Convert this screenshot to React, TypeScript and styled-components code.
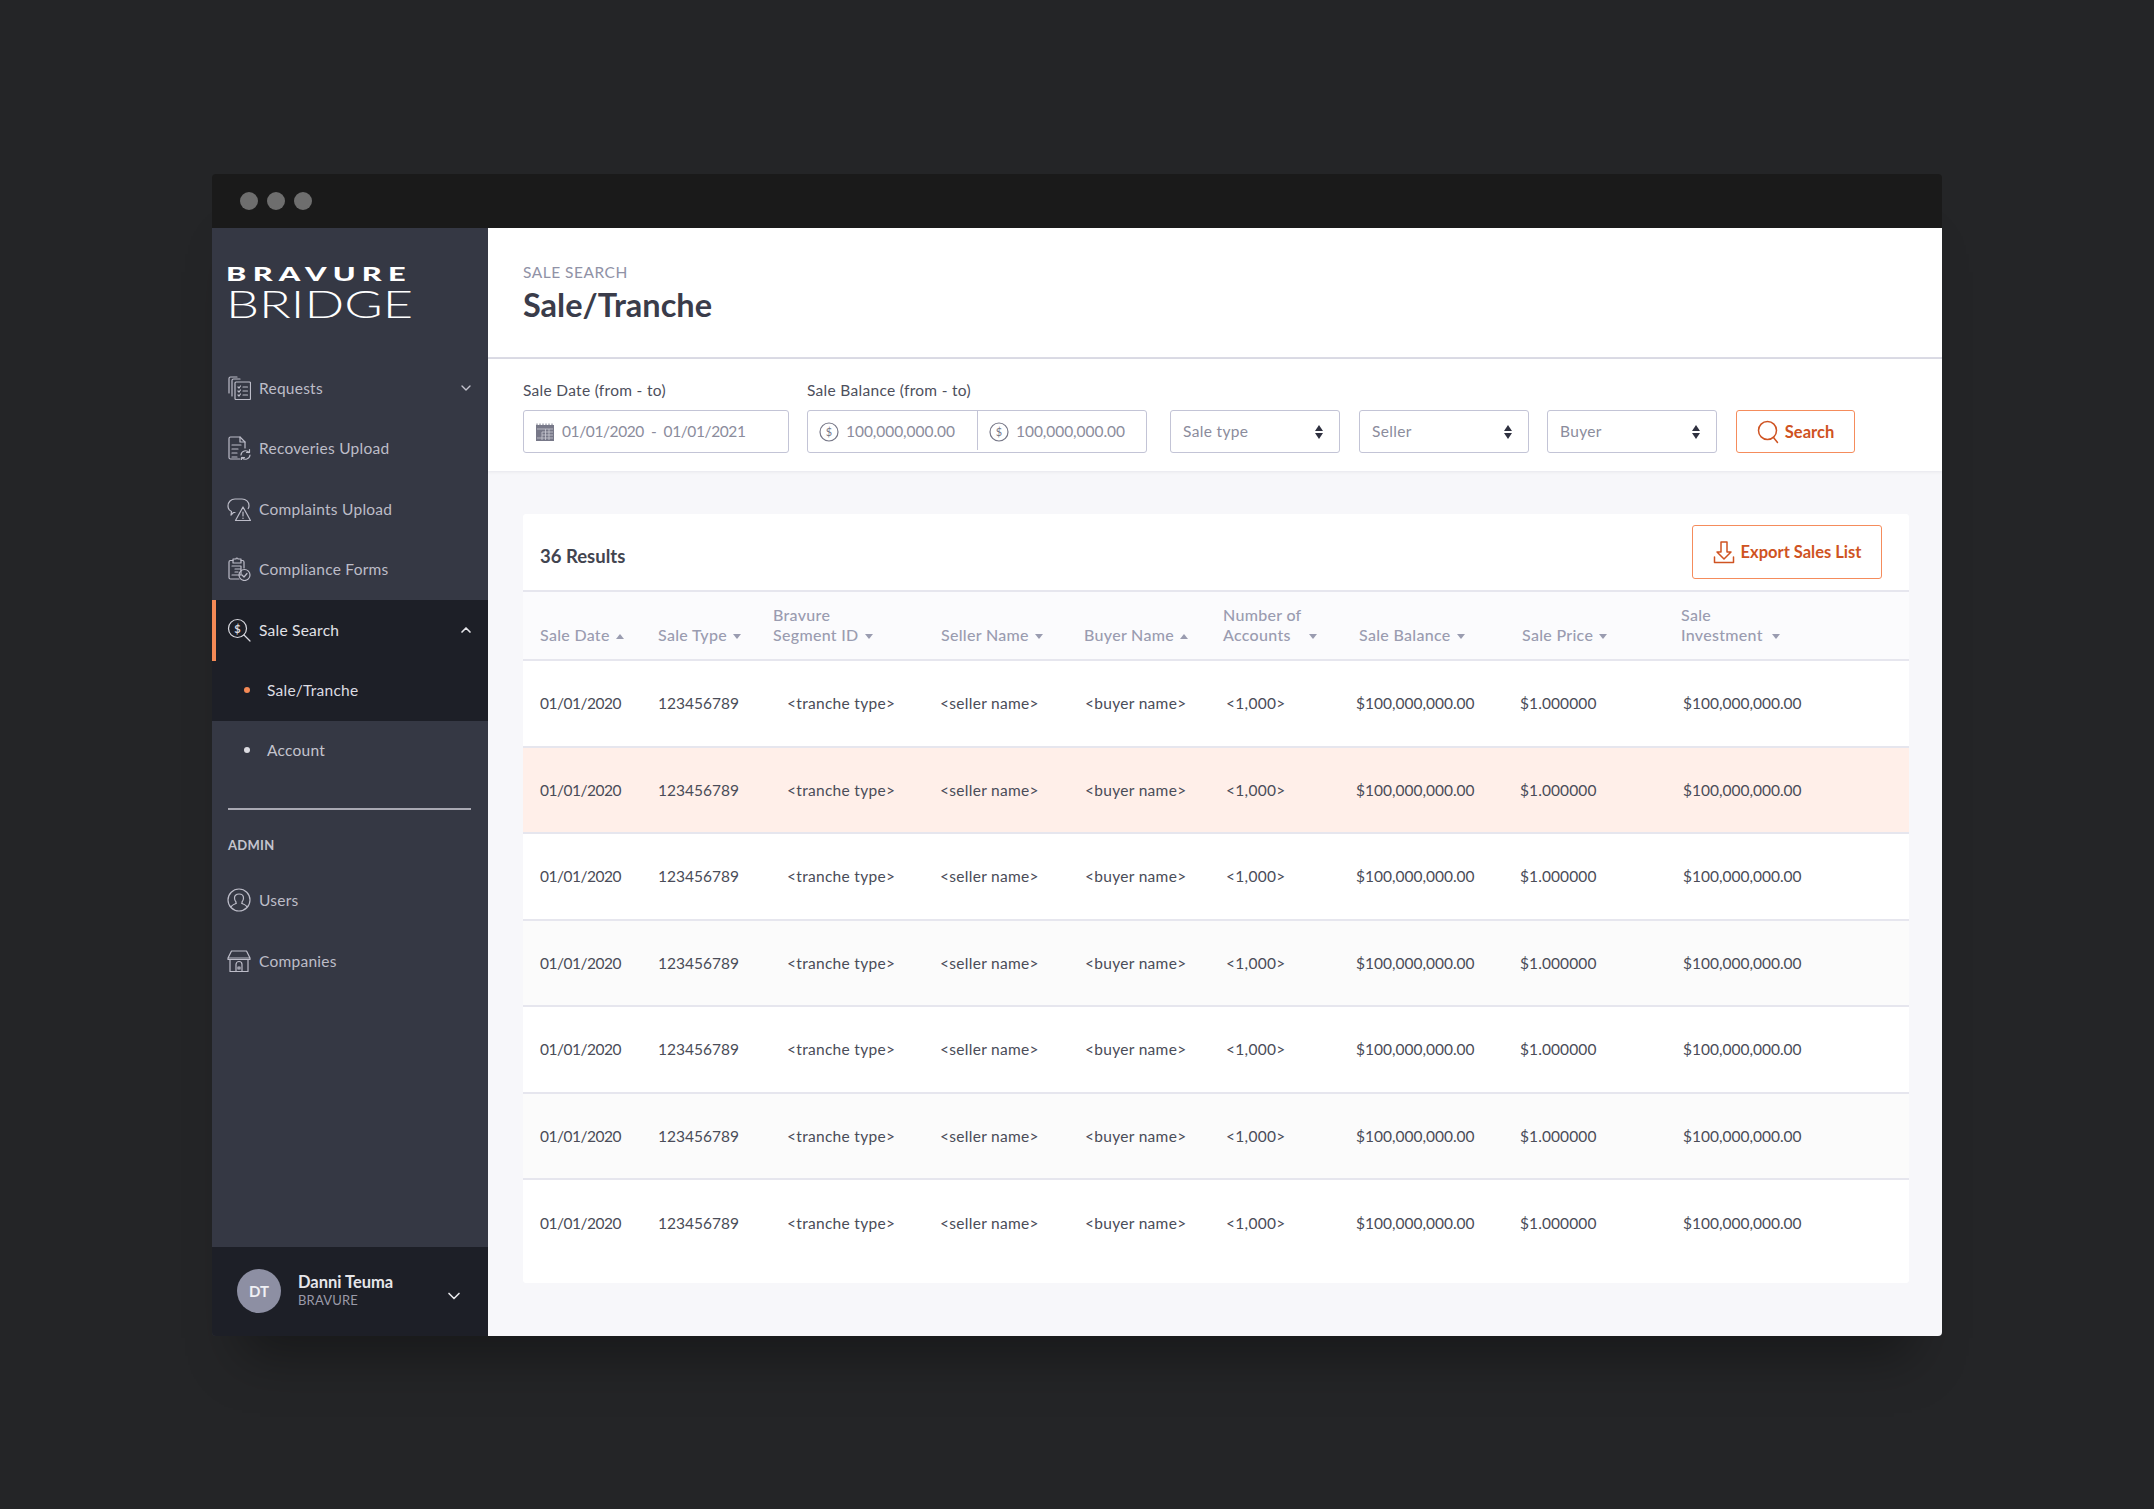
import React from "react";
import styled, { createGlobalStyle } from "styled-components";
import { ChevronDown, ChevronUp } from "lucide-react";

const GlobalStyle = createGlobalStyle`
  * { box-sizing: border-box; }
  html, body { margin: 0; padding: 0; background: #242527; }
  body { font-family: "Lato", "Noto Sans", sans-serif; }
`;

const Page = styled.div`
  width: 2154px;
  height: 1509px;
  padding: 174px 212px 0;
  background: #242527;
`;

const Window = styled.div`
  width: 1730px;
  height: 1162px;
  display: flex;
  flex-direction: column;
  box-shadow: 0 50px 50px -30px rgba(0, 0, 0, 0.35);
  border-radius: 4px;
  overflow: hidden;
`;

const TitleBar = styled.div`
  height: 54px;
  flex: none;
  background: #1a1a1a;
  display: flex;
  align-items: center;
  gap: 9px;
  padding-left: 28px;
`;

const Dot = styled.span`
  width: 18px;
  height: 18px;
  border-radius: 50%;
  background: #6e6e6e;
`;

const Body = styled.div`
  flex: 1;
  display: flex;
  min-height: 0;
`;

const Sidebar = styled.aside`
  width: 276px;
  flex: none;
  background: #353844;
  display: flex;
  flex-direction: column;
`;

const Logo = styled.svg`
  display: block;
  margin: 36px 0 0 14px;
  width: 190px;
  height: 64px;
  overflow: visible;
`;

const Nav = styled.nav`
  margin-top: 30px;
`;

const NavItem = styled.div<{ $active?: boolean }>`
  height: 60.5px;
  display: flex;
  align-items: center;
  padding-left: 15px;
  padding-bottom: 1px;
  color: ${(p) => (p.$active ? "#e2e2e8" : "#bdbdc8")};
  background: ${(p) => (p.$active ? "#1d1f27" : "transparent")};
  font-size: 15.5px;
  letter-spacing: 0.25px;
  position: relative;

  ${(p) =>
    p.$active &&
    `&::before {
      content: "";
      position: absolute;
      left: 0;
      top: 0;
      bottom: 0;
      width: 4px;
      background: #f58a56;
    }`}
`;

const NavIcon = styled.svg`
  width: 24px;
  height: 24px;
  flex: none;
  margin-right: 8px;
  fill: none;
  stroke: currentColor;
  stroke-width: 1.2;
  stroke-linecap: round;
  stroke-linejoin: round;
  color: #bcbcc8;
`;

const NavChevron = styled.span`
  margin-left: auto;
  margin-right: 14px;
  display: flex;
`;

const SubItem = styled.div<{ $active?: boolean }>`
  height: 60px;
  display: flex;
  align-items: center;
  padding-left: 32px;
  padding-bottom: 1px;
  font-size: 15.5px;
  letter-spacing: 0.25px;
  color: ${(p) => (p.$active ? "#dcdce2" : "#c4c4ce")};
  background: ${(p) => (p.$active ? "#1d1f27" : "transparent")};
`;

const Bullet = styled.span<{ $active?: boolean }>`
  width: 6px;
  height: 6px;
  border-radius: 50%;
  margin-right: 17px;
  background: ${(p) => (p.$active ? "#f58a56" : "#dcdce2")};
`;

const Divider = styled.div`
  height: 2px;
  margin: 27px 17px 0 16px;
  background: #a9a9b3;
`;

const SectionLabel = styled.div`
  margin: 27px 0 0 16px;
  font-size: 13px;
  font-weight: 700;
  letter-spacing: 0.3px;
  color: #c4c4ce;
  line-height: 16px;
`;

const AdminNav = styled.div`
  margin-top: 18px;
`;

const UserBar = styled.div`
  margin-top: auto;
  height: 89px;
  background: #1d1f27;
  display: flex;
  align-items: center;
  padding: 0 24px 0 25px;
`;

const Avatar = styled.div`
  width: 44px;
  height: 44px;
  margin-top: -1px;
  border-radius: 50%;
  background: #8d8fa3;
  color: #f0f0f4;
  font-size: 15px;
  font-weight: 700;
  display: flex;
  align-items: center;
  justify-content: center;
`;

const UserText = styled.div`
  margin-left: 17px;
  margin-top: -2px;
`;

const UserName = styled.div`
  font-size: 16.5px;
  font-weight: 700;
  color: #e6e6ea;
  line-height: 18px;
`;

const UserOrg = styled.div`
  font-size: 13px;
  letter-spacing: 0.2px;
  color: #9a9aa8;
  line-height: 18px;
`;

const UserChevron = styled.span`
  margin-left: auto;
  margin-top: 8px;
  display: flex;
`;

const Main = styled.main`
  flex: 1;
  min-width: 0;
  background: #f7f7fa;
  display: flex;
  flex-direction: column;
`;

const Header = styled.header`
  height: 131px;
  flex: none;
  background: #fff;
  border-bottom: 2px solid #dcdce6;
  padding: 34px 35px 0;
`;

const Crumb = styled.div`
  font-size: 15.5px;
  letter-spacing: 0.5px;
  line-height: 20px;
  color: #9092a6;
`;

const Title = styled.h1`
  margin: 3px 0 0;
  font-size: 32.5px;
  line-height: 40px;
  font-weight: 700;
  color: #3a3c4a;
`;

const FilterBar = styled.div`
  height: 112px;
  flex: none;
  background: #fff;
  box-shadow: 0 1px 3px rgba(40, 40, 70, 0.08);
  padding: 22px 0 18px 35px;
  display: flex;
  align-items: flex-end;
`;

const Field = styled.div<{ $gap?: number }>`
  margin-right: ${(p) => p.$gap ?? 18}px;
`;

const FieldLabel = styled.div`
  font-size: 15.5px;
  letter-spacing: 0.3px;
  line-height: 20px;
  color: #4d4f5c;
  margin-bottom: 10px;
`;

const InputBox = styled.div<{ $width: number }>`
  width: ${(p) => p.$width}px;
  height: 43px;
  padding-bottom: 2px;
  background: #fff;
  border: 1px solid #c3c4d6;
  border-radius: 3px;
  display: flex;
  align-items: center;
  color: #8b8c9c;
  font-size: 15.5px;
  letter-spacing: 0.35px;
`;

const InputPart = styled.div<{ $width?: number; $ruled?: boolean; $tracking: number }>`
  height: 100%;
  width: ${(p) => (p.$width ? `${p.$width}px` : "auto")};
  flex: ${(p) => (p.$width ? "none" : 1)};
  display: flex;
  align-items: center;
  padding-left: 11px;
  letter-spacing: ${(p) => p.$tracking}px;
  border-right: ${(p) => (p.$ruled ? "1px solid #c3c4d6" : "none")};
`;

const FieldIcon = styled.svg`
  width: 20px;
  height: 20px;
  flex: none;
  margin-right: 7px;
  margin-top: 2px;
  fill: none;
  stroke: #777888;
  stroke-width: 1.2;
`;

const SelectBox = styled(InputBox)`
  padding: 0 16px 2px 12px;
  justify-content: space-between;
`;

const UpDown = styled.span`
  display: flex;
  flex-direction: column;
  gap: 2px;
  margin-top: 2px;

  &::before,
  &::after {
    content: "";
    width: 0;
    height: 0;
    border-left: 4.5px solid transparent;
    border-right: 4.5px solid transparent;
  }
  &::before {
    border-bottom: 6px solid #2f3140;
  }
  &::after {
    border-top: 6px solid #2f3140;
  }
`;

const OutlineButton = styled.button<{ $width: number; $height: number }>`
  width: ${(p) => p.$width}px;
  height: ${(p) => p.$height}px;
  background: #fff;
  border: 1px solid #f58c5c;
  border-radius: 3px;
  color: #cf5322;
  font-family: inherit;
  font-size: 16.5px;
  font-weight: 700;
  display: flex;
  align-items: center;
  justify-content: center;
  gap: 6px;
  padding: 0;
`;

const ButtonIcon = styled.svg`
  width: 22px;
  height: 24px;
  flex: none;
  fill: none;
  stroke: #cf5322;
  stroke-width: 1.5;
  stroke-linecap: round;
  stroke-linejoin: round;
`;

const Content = styled.div`
  flex: 1;
  padding: 43px 33px 53px 35px;
  min-height: 0;
`;

const Card = styled.section`
  height: 100%;
  background: #fff;
  border-radius: 3px;
`;

const CardTop = styled.div`
  height: 78px;
  display: flex;
  align-items: center;
  justify-content: space-between;
  padding: 0 27px 1px 17px;
  border-bottom: 2px solid #e6e6ee;
`;

const Results = styled.div`
  font-size: 18.5px;
  font-weight: 700;
  color: #42444f;
  margin-top: 8px;
`;

const columns = "119px 114px 168px 143px 139px 134px 163px 161px 1fr";

const HeadRow = styled.div`
  height: 69px;
  display: grid;
  grid-template-columns: ${columns};
  padding: 0 0 15px 17px;
  background: #fbfbfd;
  border-bottom: 2px solid #e6e6ee;
  align-items: end;
`;

const HeadCell = styled.div<{ $indent?: number }>`
  margin-left: ${(p) => p.$indent ?? 0}px;
  font-size: 16px;
  letter-spacing: 0.3px;
  line-height: 19.5px;
  font-weight: 500;
  color: #9a9cb0;
  white-space: pre-line;
`;

const Caret = styled.span<{ $up?: boolean; $gap?: number }>`
  display: inline-block;
  width: 0;
  height: 0;
  margin-left: ${(p) => p.$gap ?? 6}px;
  vertical-align: 2px;
  border-left: 4.5px solid transparent;
  border-right: 4.5px solid transparent;
  ${(p) =>
    p.$up ? "border-bottom: 5px solid #9a9cb0;" : "border-top: 5px solid #9a9cb0;"}
`;

const Row = styled.div<{ $bg: string }>`
  height: 86.5px;
  display: grid;
  grid-template-columns: ${columns};
  padding-left: 17px;
  align-items: center;
  background: ${(p) => p.$bg};
  border-bottom: 2px solid #e6e6ee;
  &:last-child {
    border-bottom: none;
  }
`;

const Cell = styled.div<{ $indent?: number; $tracking: number }>`
  margin-left: ${(p) => p.$indent ?? 0}px;
  font-size: 15.5px;
  letter-spacing: ${(p) => p.$tracking}px;
  color: #4a4c58;
`;

const heads: { label: string; up?: boolean; indent?: number; gap?: number }[] = [
  { label: "Sale Date", up: true },
  { label: "Sale Type", indent: -1 },
  { label: "Bravure\nSegment ID" },
  { label: "Seller Name" },
  { label: "Buyer Name", up: true },
  { label: "Number of\nAccounts", gap: 18 },
  { label: "Sale Balance", indent: 2 },
  { label: "Sale Price", indent: 2 },
  { label: "Sale\nInvestment", gap: 9 },
];

const cells: { text: string; indent?: number; tracking: number }[] = [
  { text: "01/01/2020", tracking: -0.5 },
  { text: "123456789", indent: -1, tracking: 0 },
  { text: "<tranche type>", indent: 14, tracking: 0.3 },
  { text: "<seller name>", indent: -1, tracking: 0.3 },
  { text: "<buyer name>", indent: 1, tracking: 0.3 },
  { text: "<1,000>", indent: 3, tracking: 0.3 },
  { text: "$100,000,000.00", indent: -1, tracking: 0 },
  { text: "$1.000000", tracking: 0.1 },
  { text: "$100,000,000.00", indent: 2, tracking: 0 },
];

const rowColors = ["#fff", "#ffefe9", "#fff", "#fbfbfb", "#fff", "#fbfbfb", "#fff"];

const RequestsIcon = () => (
  <NavIcon viewBox="0 0 24 24">
    <path d="M2 17V2.500A1.500 1.500 0 0 1 3.500 1H10" />
    <path d="M5 20V4.500A1.500 1.500 0 0 1 6.500 3H13" />
    <rect x="8" y="6" width="15.500" height="17.500" rx="1" />
    <path d="M11 11l1 1 1.500-2M16 11h4.500M11 15l1 1 1.500-2M16 15h4.500M11 19l1 1 1.500-2M16 19h4.500" />
  </NavIcon>
);

const RecoveriesIcon = () => (
  <NavIcon viewBox="0 0 24 24">
    <path d="M13 23H3.500A1.500 1.500 0 0 1 2 21.500V2.500A1.500 1.500 0 0 1 3.500 1H13l5 5v6" />
    <path d="M13 1v5h5M5 9h9M5 13h6M5 17h5M5 21h5" />
    <path d="M14 19a4.500 4.500 0 0 1 8-2.500M23 19a4.500 4.500 0 0 1-8 2.500M22.500 13.500v3h-3M14.500 24v-2.500h3" />
  </NavIcon>
);

const ComplaintsIcon = () => (
  <NavIcon viewBox="0 0 24 24">
    <path d="M8 15.500H6.500L4 18l.5-3.500C2 13.500 1 11.500 1 9c0-4 3-7 7-7h7c4 0 7 3 7 6.500 0 1.200-.2 2.200-.8 3" />
    <path d="M16 10l7.500 13.500h-15zM16 15v4M16 21v.4" />
  </NavIcon>
);

const ComplianceIcon = () => (
  <NavIcon viewBox="0 0 24 24">
    <path d="M12 22H3.500A1.500 1.500 0 0 1 2 20.500V5a1.500 1.500 0 0 1 1.500-1.500H6M14 3.500h1.500A1.500 1.500 0 0 1 17 5v6" />
    <path d="M6 2h3a1 1 0 0 1 2 0h3v4H6zM5 9h9v9H5M8 12h5M8 15h3" />
    <circle cx="17.500" cy="18" r="5.500" />
    <path d="M15 18l2 2 3-3.500" />
  </NavIcon>
);

const SaleSearchIcon = () => (
  <NavIcon viewBox="0 0 24 24" style={{ color: "#d8d8df" }}>
    <circle cx="10.500" cy="10.500" r="9" />
    <path d="M17 17l6 6" />
    <text x="10.500" y="14.500" textAnchor="middle" fontSize="11" fontWeight="700" fill="currentColor" stroke="none">
      $
    </text>
  </NavIcon>
);

const UsersIcon = () => (
  <NavIcon viewBox="0 0 24 24">
    <circle cx="12" cy="12" r="11" />
    <path d="M9 15.500c-2.500 1-4.500 1.800-5 3.500M15 15.500c2.500 1 4.500 1.800 5 3.500" />
    <path d="M9 15.500v-1.500c-1-1-1.500-2.300-1.500-4C7.500 7.500 9.500 6 12 6s4.500 1.500 4.500 4c0 1.700-.5 3-1.500 4v1.500" />
  </NavIcon>
);

const CompaniesIcon = () => (
  <NavIcon viewBox="0 0 24 24">
    <path d="M4.500 2h15L23 9H1zM1 9v1.500h22V9" />
    <path d="M3 10.500V22.500h18V10.500" />
    <path d="M9 22.500v-7a3 3 0 0 1 6 0v7M11 18h2v2h-2z" />
  </NavIcon>
);

const DollarIcon = () => (
  <FieldIcon viewBox="0 0 20 20">
    <circle cx="10" cy="10" r="9" />
    <text x="10" y="14" textAnchor="middle" fontSize="11" fill="#777888" stroke="none">
      $
    </text>
  </FieldIcon>
);

const CalendarIcon = () => (
  <FieldIcon viewBox="0 0 20 20">
    <rect x="1" y="3" width="18" height="16" fill="#777888" stroke="none" />
    <path d="M2 1.500v2M5 1.500v2M8 1.500v2M11 1.500v2M14 1.500v2M17 1.500v2" strokeWidth="1" />
    <path d="M2 7h16M7 10h11M7 13h11M2 16h16M7 10v8M10.500 7v11M14 7v11" stroke="#c9c9d2" strokeWidth="0.8" />
  </FieldIcon>
);

const SearchIcon = () => (
  <ButtonIcon viewBox="0 0 22 24">
    <circle cx="10.500" cy="10.500" r="9" />
    <path d="M16.500 17.500l4 5" />
  </ButtonIcon>
);

const ExportIcon = () => (
  <ButtonIcon viewBox="0 0 22 24">
    <path d="M8 2h6v10h4l-7 7-7-7h4z" />
    <path d="M1.500 17v5.500h19V17" />
  </ButtonIcon>
);

const App = () => {
  return (
    <Page>
      <GlobalStyle />
      <Window>
        <TitleBar>
          <Dot />
          <Dot />
          <Dot />
        </TitleBar>
        <Body>
          <Sidebar>
            <Logo viewBox="0 0 190 64">
              <text
                x="0"
                y="17"
                textLength="186"
                lengthAdjust="spacingAndGlyphs"
                fontSize="19.500"
                fontWeight="900"
                letterSpacing="4"
                fill="#fff"
                fontFamily="Lato, sans-serif"
              >
                BRAVURE
              </text>
              <text
                x="0"
                y="54"
                textLength="187"
                lengthAdjust="spacingAndGlyphs"
                fontSize="37.500"
                fontWeight="300"
                fill="#fff"
                fontFamily="Lato, sans-serif"
              >
                BRIDGE
              </text>
            </Logo>
            <Nav>
              <NavItem>
                <RequestsIcon />
                Requests
                <NavChevron>
                  <ChevronDown size={16} strokeWidth={2} color="#c4c4ce" />
                </NavChevron>
              </NavItem>
              <NavItem>
                <RecoveriesIcon />
                Recoveries Upload
              </NavItem>
              <NavItem>
                <ComplaintsIcon />
                Complaints Upload
              </NavItem>
              <NavItem>
                <ComplianceIcon />
                Compliance Forms
              </NavItem>
              <NavItem $active>
                <SaleSearchIcon />
                Sale Search
                <NavChevron>
                  <ChevronUp size={16} strokeWidth={2.5} color="#e6e6ea" />
                </NavChevron>
              </NavItem>
              <SubItem $active>
                <Bullet $active />
                Sale/Tranche
              </SubItem>
              <SubItem>
                <Bullet />
                Account
              </SubItem>
            </Nav>
            <Divider />
            <SectionLabel>ADMIN</SectionLabel>
            <AdminNav>
              <NavItem>
                <UsersIcon />
                Users
              </NavItem>
              <NavItem>
                <CompaniesIcon />
                Companies
              </NavItem>
            </AdminNav>
            <UserBar>
              <Avatar>DT</Avatar>
              <UserText>
                <UserName>Danni Teuma</UserName>
                <UserOrg>BRAVURE</UserOrg>
              </UserText>
              <UserChevron>
                <ChevronDown size={20} strokeWidth={2} color="#e6e6ea" />
              </UserChevron>
            </UserBar>
          </Sidebar>
          <Main>
            <Header>
              <Crumb>SALE SEARCH</Crumb>
              <Title>Sale/Tranche</Title>
            </Header>
            <FilterBar>
              <Field>
                <FieldLabel>Sale Date (from - to)</FieldLabel>
                <InputBox $width={266}>
                  <InputPart $tracking={-0.4}>
                    <CalendarIcon />
                    01/01/2020&nbsp;&nbsp;-&nbsp;&nbsp;01/01/2021
                  </InputPart>
                </InputBox>
              </Field>
              <Field $gap={23}>
                <FieldLabel>Sale Balance (from - to)</FieldLabel>
                <InputBox $width={340}>
                  <InputPart $width={170} $ruled $tracking={-0.05}>
                    <DollarIcon />
                    100,000,000.00
                  </InputPart>
                  <InputPart $tracking={-0.05}>
                    <DollarIcon />
                    100,000,000.00
                  </InputPart>
                </InputBox>
              </Field>
              <Field $gap={19}>
                <SelectBox $width={170}>
                  Sale type
                  <UpDown />
                </SelectBox>
              </Field>
              <Field>
                <SelectBox $width={170}>
                  Seller
                  <UpDown />
                </SelectBox>
              </Field>
              <Field $gap={19}>
                <SelectBox $width={170}>
                  Buyer
                  <UpDown />
                </SelectBox>
              </Field>
              <OutlineButton $width={119} $height={43}>
                <SearchIcon />
                Search
              </OutlineButton>
            </FilterBar>
            <Content>
              <Card>
                <CardTop>
                  <Results>36 Results</Results>
                  <OutlineButton $width={190} $height={54}>
                    <ExportIcon />
                    Export Sales List
                  </OutlineButton>
                </CardTop>
                <HeadRow>
                  {heads.map((h) => (
                    <HeadCell key={h.label} $indent={h.indent}>
                      {h.label}
                      <Caret $up={h.up} $gap={h.gap} />
                    </HeadCell>
                  ))}
                </HeadRow>
                {rowColors.map((bg, i) => (
                  <Row key={i} $bg={bg}>
                    {cells.map((c) => (
                      <Cell key={c.text + c.indent} $indent={c.indent} $tracking={c.tracking}>
                        {c.text}
                      </Cell>
                    ))}
                  </Row>
                ))}
              </Card>
            </Content>
          </Main>
        </Body>
      </Window>
    </Page>
  );
};

export default App;
